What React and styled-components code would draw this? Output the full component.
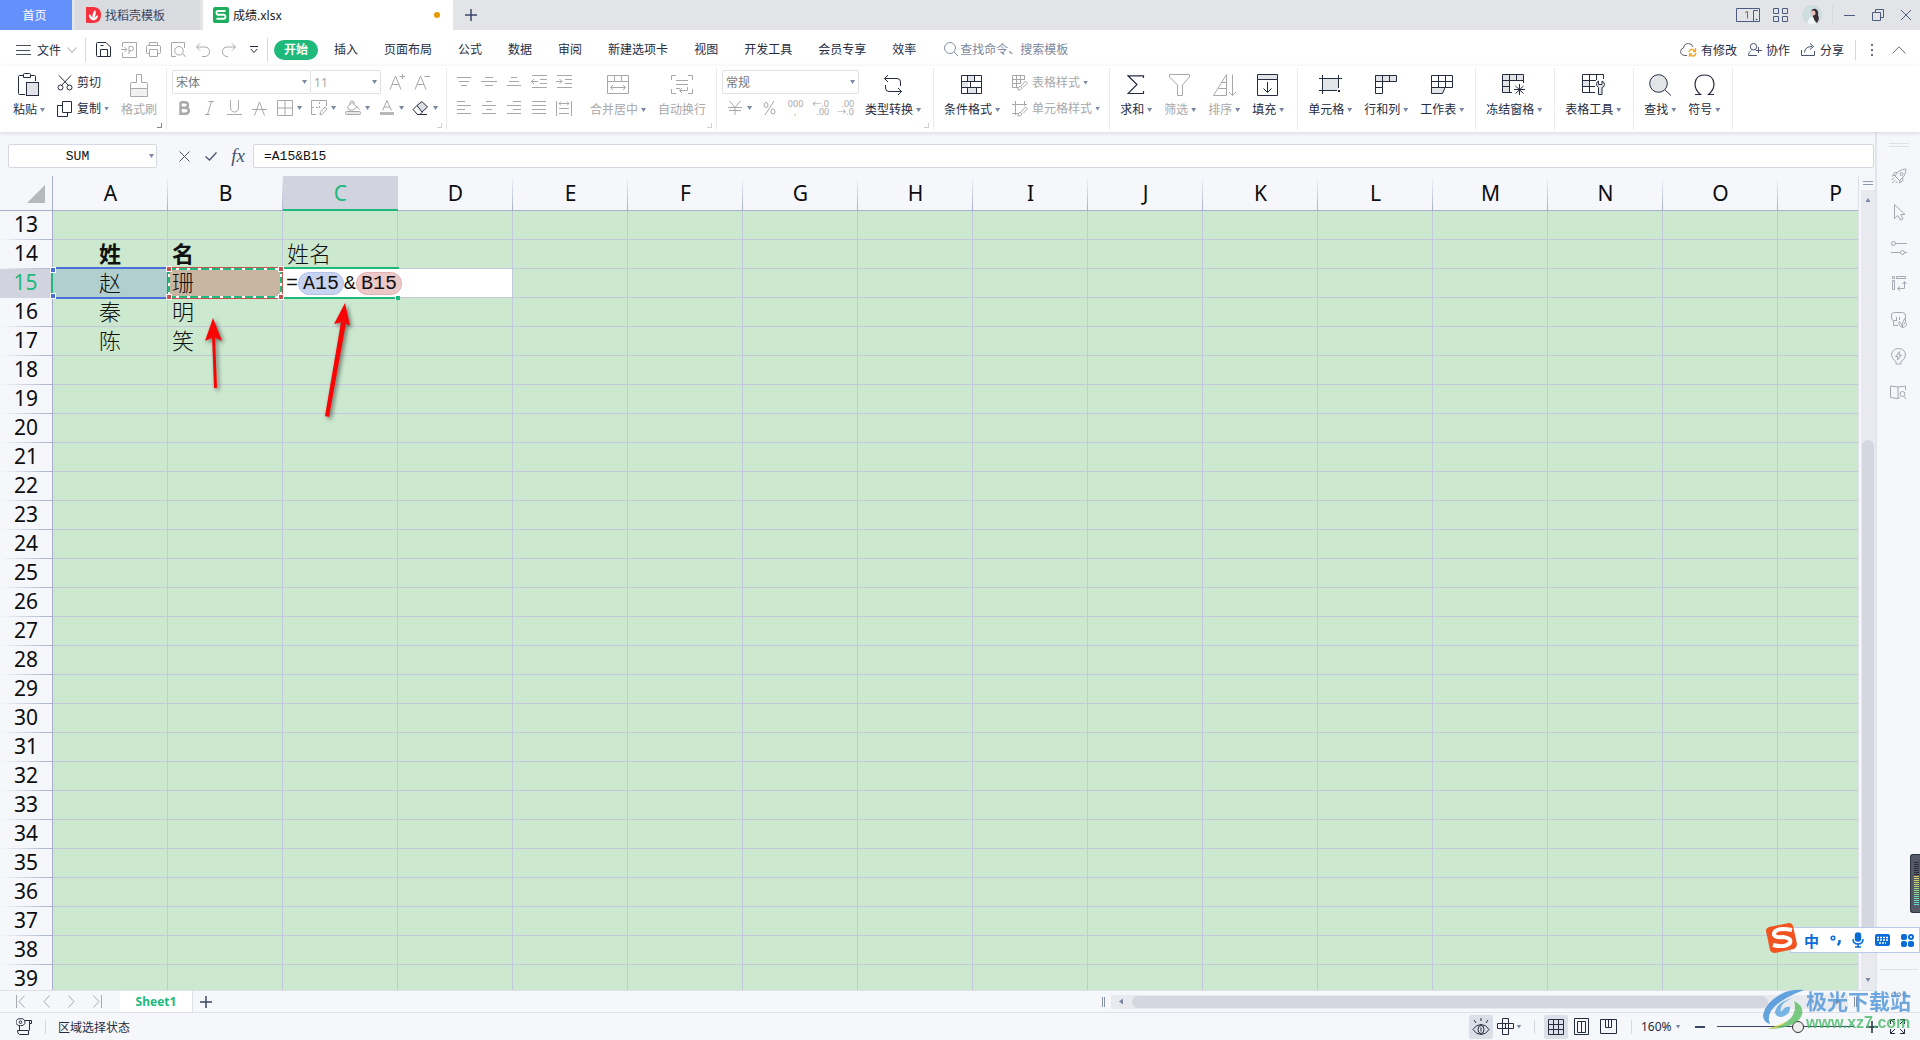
import React, {useState} from 'react';
import styled, {createGlobalStyle, css} from "styled-components";

const GlobalStyle = createGlobalStyle`
  * {
    box-sizing: border-box;
  }

  body {
    margin: 0;
    overflow: hidden;
    background: #f5f7fa;
    color: #262c3f;
    font-family: "Noto Sans", "Noto Sans CJK SC", sans-serif;
    font-size: 12px;
  }

  button, input, select {
    font: inherit;
    color: inherit;
    margin: 0;
    padding: 0;
    border: 0;
    background: none;
    outline: none;
  }

  button {
    white-space: nowrap;
  }

  svg {
    display: block;
    flex: none;
  }
`;

const GREEN = "#20b97c";
const MUTED = "#a8a8aa";
const DARK = "#262c3f";
const SHADE = "#e3e4e8";

/* ---------- icons: [width, height, drawing] ---------- */

const ICONS = {
    menu: [15, 12, <path d="M0 1.5H15M0 6.5H14M0 10.5H15" />],
    chevronDown: [10, 6, <path d="M.5.5L5 5.5L9.500.5" />],
    chevronUp: [14, 8, <path d="M.5 7.5L7 .8L13.500 7.5" />],
    save: [15, 15, <path d="M.5 1.500Q.5.5 1.500.5H10L14.500 5V14.500H1.500Q.5 14.500.5 13.500ZM4.500 14.500V7.500H11.500V14.500M4.500 3.500H7.500" />],
    exportPdf: [16, 16, <path d="M1.500 5V.5H15.500V15.500H1.500V10.500M0 7.500H5.500M3.500 5L6 7.500L3.500 10M8 12V4.500H10.500Q12.500 4.500 12.500 6.500T10.500 8.800H8" />],
    print: [15, 15, <path d="M3.500 3.500V.5H11.500V3.500M3.500 11.500H1.500Q.5 11.500.5 10.500V4.500Q.5 3.500 1.500 3.500H13.500Q14.500 3.500 14.500 4.500V10.500Q14.500 11.500 13.500 11.500H11.500M3.500 7.500H11.500V14.500H3.500Z" />],
    preview: [15, 16, <path d="M5 14.500H.5V.5H13.500V6M12 11.500L14.500 15M8 4.500A4 4 0 1 0 8 13A4 4 0 1 0 8 4.500" />],
    undo: [14, 14, <path d="M4 .5L.5 4L4 7.500M.5 4H9Q13.500 4.500 13.500 8.800Q13.500 13 9 13.500H6" />],
    redo: [14, 14, <path d="M10 .5L13.500 4L10 7.500M13.500 4H5Q.5 4.500.5 8.800Q.5 13 5 13.500H6" />],
    more: [8, 8, <path d="M0 .5H8M.8 3L4 6.500L7.200 3" />],
    search: [15, 15, <path d="M6 .5A5.500 5.500 0 1 0 6 11.500A5.500 5.500 0 1 0 6 .5M10 10L14 14" />],
    paste: [22, 24, <>
        <path d="M7 21.500H1.500Q.5 21.500.5 20.500V3.500Q.5 2.500 1.500 2.500H5M13 2.500H16.500Q17.500 2.500 17.500 3.500V8M5.500 1.500Q5.500.5 6.500.5H11.500Q12.500.5 12.500 1.500V4.500H5.500Z" />
        <rect x="8.500" y="9.500" width="12" height="13" fill={SHADE} />
    </>],
    cut: [16, 16, <path d="M2 .5L12 11M14 .5L4 11M3.500 10A2.500 2.500 0 1 0 3.500 15A2.500 2.500 0 1 0 3.500 10M12.500 10A2.500 2.500 0 1 0 12.500 15A2.500 2.500 0 1 0 12.500 10" />],
    copy: [16, 16, <path d="M5.500.5H14.500V11.500H5.500ZM5.500 4.500H.5V15.500H10.500V11.500" />],
    brush: [20, 25, <>
        <path d="M1.500 15.500H18.500V23.500H1.500Z" fill="#f1f1f1" />
        <path d="M1.500 15.500V10.500Q1.500 9.500 3 9.500H7.500V1.500H12.500V9.500H17Q18.500 9.500 18.500 10.500V15.500" />
    </>],
    fontUp: [16, 16, <path d="M1 15.500L6.500 2L12 15.500M3 10.500H10M10.500 2.500H16M13.500 0V5" />],
    fontDown: [16, 16, <path d="M1 15.500L6.500 2L12 15.500M3 10.500H10M10.500 2.500H16" />],
    bold: [11, 14, <path strokeWidth="2.400" d="M1.500 1.200H5.500Q9 1.200 9 4T5.500 6.800H1.500M5.500 6.800Q9.800 6.800 9.800 9.800T6 12.800H1.500V1.200" />],
    italic: [9, 14, <path d="M3.500.5H9M0 13.500H5M6.500.5L2.500 13.500" />],
    underline: [15, 16, <path d="M3.500 0V7Q3.500 12 7.500 12T11.500 7V0M0 14.500H15" />],
    strike: [15, 15, <path d="M2.500 14.500L7.500 1L12.500 14.500M0 8.500H15" />],
    borders: [16, 16, <path d="M.5.5H15.500V15.500H.5ZM8 .5V15.500M.5 8H15.500" />],
    drawBorder: [16, 16, <path d="M5 14.500H.5V.5H15.500V6M.5 7.500H3M5 7.500H7M8.500 2V4M8.500 6V8M9 15L9.500 12L14 7L16 9L11.500 14Z" />],
    fill: [16, 16, <>
        <path d="M2.500 7L7 2.500L12 7L8 10H4ZM5 5V2Q7 -.5 9 2V4M12 7Q14.500 8 14 10" />
        <rect x=".5" y="11.500" width="15" height="3" rx="1" fill="#e6e6e6" />
    </>],
    fontColor: [14, 16, <>
        <path d="M2.500 10.500L7 .5L11.500 10.500M4 7H10" />
        <rect x="0" y="12" width="14" height="3" fill="#b8b8ba" stroke="none" />
    </>],
    eraser: [17, 15, <>
        <path d="M5 4.500L10 .5L15.500 6L10 11Z" fill="#dcdee3" />
        <path d="M5 4.500L1 8.500L5.500 13.500H8L10.500 11M5 13.500H15" />
    </>],
    alignTop: [14, 10, <path d="M0 .5H14M2 4.500H12M4 8.500H10" />],
    alignMid: [16, 10, <path d="M4 .5H12M0 4.500H16M4 8.500H12" />],
    alignBottom: [14, 10, <path d="M4 .5H10M2 4.500H12M0 8.500H14" />],
    outdent: [16, 14, <path d="M1 .5H16M9 4.500H16M9 8.500H16M1 12.500H16M.5 6.500H7M3 4L.5 6.500L3 9" />],
    indent: [16, 14, <path d="M1 .5H16M9 4.500H16M9 8.500H16M1 12.500H16M0 6.500H6M3.500 4L6 6.500L3.500 9" />],
    alignLeft: [14, 14, <path d="M0 .5H8M0 4.500H14M0 8.500H8M0 12.500H14" />],
    alignCenter: [14, 14, <path d="M4 .5H10M0 4.500H14M4 8.500H10M0 12.500H14" />],
    alignRight: [14, 14, <path d="M6 .5H14M0 4.500H14M6 8.500H14M0 12.500H14" />],
    justify: [14, 14, <path d="M0 .5H14M0 4.500H14M0 8.500H14M0 12.500H14" />],
    distribute: [16, 15, <path d="M.5 0V15M15.500 0V15M3 2.500H13M5 .5L3 2.500L5 4.500M11 .5L13 2.500L11 4.500M3 7.500H13M3 12.500H13" />],
    merge: [22, 20, <path d="M.5.5H21.500V18.500H.5ZM.5 6.500H21.500M7.500.5V6.500M14.500.5V6.500M3.500 12.500H18.500M6 10L3.500 12.500L6 15M16 10L18.500 12.500L16 15" />],
    wrap: [22, 20, <path d="M.5 5V.5H5M17 .5H21.500V5M.5 14V18.500H5M21.500 14V18.500H17M5 5.500H17M5 9.500H17M5 13.500H9M16.500 12V15.500H9M11 13L8.500 15.500L11 18" />],
    yuan: [14, 14, <path d="M1.500 0L7 6.500L12.500 0M0 6.500H14M1 9.500H13M7 6.500V14" />],
    percent: [13, 14, <path d="M11 0L2 14M3 1.500A2 2.500 0 1 0 3 6.500A2 2.500 0 1 0 3 1.500M10 8A2 2.500 0 1 0 10 13A2 2.500 0 1 0 10 8" />],
    convert: [20, 22, <path d="M5 1L1.500 4.500L5 8M1.500 4.500H14Q17.500 4.500 17.500 8V12M15 21L18.500 17.500L15 14M18.500 17.500H6Q2.500 17.500 2.500 14V11" />],
    condFormat: [22, 20, <>
        <path d="M6.500.5H13.500V6.500H6.500ZM.5 6.500H7V12.500H.5ZM6.500 13H15.500V18.500H6.500Z" fill={SHADE} stroke="none" />
        <path d="M.5.5H20.500V18.500H.5ZM.5 6.500H20.500M.5 12.500H20.500M6.500.5V6.500M13.500.5V6.500M9.500 6.500V12.500M6.500 12.500V18.500M15.500 12.500V18.500" />
    </>],
    tableStyle: [16, 16, <path d="M7 12.500H.5V.5H12.500V5M.5 4.500H12.500M.5 8.500H9M4.500.5V12.500M8.500.5V8M6 15Q5 13 8 11L10 13Q9 15.500 6 15M9 11L13.500 6L15.500 8L11 12.500" />],
    cellStyle: [16, 16, <path d="M0 3.500H15M3.500 0V14M0 12.500H6M12.500 0V5M6 15Q5 13 8 11L10 13Q9 15.500 6 15M9 11L13.500 6L15.500 8L11 12.500" />],
    sum: [18, 20, <path strokeWidth="1.200" d="M16.500 3V.8H1L10 9.500L1 18.500H16.500V16" />],
    filter: [22, 22, <path d="M.5.5H20.500V3L13.500 11V21.500H8.500V11L.5 3Z" />],
    sort: [23, 22, <path d="M.5 21.500L13.500.5V21.500ZM5.500 14.500H13.500M8.500 8.500H13.500M19.500.5V21.500M16 18L19.500 21.500L23 18" />],
    fillDown: [22, 22, <>
        <path d="M.5.5H20.500V5.500H.5Z" fill={SHADE} />
        <path d="M.5 5.500H20.500V21.500H.5ZM10.500 8V18M6.500 14.500L10.500 18.500L14.500 14.500" />
    </>],
    cell: [23, 20, <>
        <path d="M3.500 3.500H19.500V15.500H3.500Z" fill={SHADE} stroke="none" />
        <path d="M0 3.500H23M3.500 0V19M0 15.500H18M19.500 0V13" />
        <rect x="19" y="15" width="2" height="2" fill={DARK} stroke="none" />
    </>],
    rowCol: [22, 20, <>
        <path d="M.5.5H21.500V6.500H.5Z" fill={SHADE} stroke="none" />
        <path d="M.5.5H21.500V6.500H.5ZM7.500.5V18.500H.5V.5M14.500.5V6.500M.5 12.500H7.500" />
    </>],
    worksheet: [23, 20, <>
        <path d="M.5 12.500H14.500L12 18.500H.5Z" fill={SHADE} stroke="none" />
        <path d="M.5.5H21.500V12.500H.5ZM.5 6.500H21.500M7.500.5V12.500M14.500.5V12.500M.5 12.500V18.500H11.500L14 12.500" />
    </>],
    freeze: [24, 22, <>
        <path d="M.5.5H21.500V6.500H7.500V18.500H.5Z" fill={SHADE} stroke="none" />
        <path d="M10 18.500H.5V.5H21.500V9M.5 6.500H21.500M.5 12.500H7.500M7.500.5V18.500M14.500.5V6.500M17.500 10V21M12 15.500H23M13.500 12L21.500 19.500M21.500 12L13.500 19.500" />
    </>],
    tableTool: [23, 22, <>
        <path d="M.5 6.500H7.500V12.500H.5Z" fill={SHADE} stroke="none" />
        <path d="M13 18.500H.5V.5H21.500V5M.5 6.500H14M.5 12.500H13M7.500.5V18.500M14.500.5V6" />
        <path d="M16.500 20.500V13.500Q14 12 14.500 9.500Q15 7.500 16.500 7V10.500H20V7Q22.500 8 22.500 10.500T20 13.500V20.500Z" fill={SHADE} />
    </>],
    find: [23, 22, <>
        <circle cx="9.500" cy="9.500" r="8.800" fill={SHADE} />
        <path d="M16 16L22 21.500" />
    </>],
    omega: [21, 22, <path strokeWidth="1.200" d="M1 20.500H6.500Q1 16 1 10Q1.500 1 10.500 1T20 10Q20 16 14.500 20.500H20" />],
    cloud: [17, 14, <>
        <path d="M7 12.500H5Q.5 12 .5 8.500Q.8 5.500 3.500 5Q4 .5 8.500.5Q12 .8 13 4" />
        <path stroke="#f5a623" strokeWidth="1.300" d="M9 9Q10 6 13 6.500L15.500 8M15.500 5V8.500H13M16 10Q15 13.500 12 13L9.500 11.500M9.500 14V11H12" />
    </>],
    people: [14, 14, <path d="M5.500.5A3.200 3.200 0 1 0 5.500 7A3.200 3.200 0 1 0 5.500.5M3 7.500Q.5 9 .5 12.500H9M9 7.500H8M10.500 4V10M7.800 7.500H14" />],
    share: [15, 14, <path d="M.5 7V12.500H13.500V8M3.500 9.500Q4 3.500 11 3.500M9 .5L12.500 3.500L9 6.500" />],
    dots: [2, 12, <path strokeWidth="2" d="M1 0V2M1 5V7M1 10V12" />],
    windows: [24, 15, <>
        <path d="M.5.5H23.500V13.500H.5ZM22 2.500H17.500V13M19.500 11.500H21.500" />
        <path stroke="#7b6a58" d="M9 4.500L11.500 3.500V10.500" />
    </>],
    apps: [15, 15, <path d="M.5.5H5.500V5.500H.5ZM9.500.5H14.500V5.500H9.500ZM.5 8.500H5.500V13.500H.5ZM9.500 8.500H14.500V13.500H9.500Z" />],
    minimize: [11, 2, <path d="M0 1.500H11" />],
    restore: [12, 12, <path d="M.5 3.500H8.500V11.500H.5ZM3.500 3.500V.5H11.500V8.500H8.500" />],
    close: [10, 10, <path d="M0 0L10 10M10 0L0 10" />],
    plus: [12, 12, <path strokeWidth="1.500" d="M6 0V12M0 6H12" />],
    cross: [11, 11, <path d="M.5.5L10.500 10.500M10.500.5L.5 10.500" />],
    check: [12, 9, <path strokeWidth="1.300" d="M.5 4.500L4.500 8L11.500.5" />],
    first: [9, 13, <path d="M.5 0V13M8.500.5L3 6.500L8.500 12.500" />],
    prev: [7, 13, <path d="M6.500.5L1 6.500L6.500 12.500" />],
    next: [7, 13, <path d="M.5.5L6 6.500L.5 12.500" />],
    last: [9, 13, <path d="M8.500 0V13M.5.5L6 6.500L.5 12.500" />],
    macro: [17, 17, <path d="M4.500.8A3.500 3.500 0 1 0 4.500 7.500A3.500 3.500 0 1 0 4.500.8M4.500 2.800A1.300 1.300 0 1 0 4.500 5.500A1.300 1.300 0 1 0 4.500 2.800M8.500 2.500H15.500V5.500H13.500V12.500M3.500 8V12M13.500 2.500V12M1.500 12.500H12.500V16.500H3.500Q1.500 16 1.500 12.500" />],
    eye: [18, 18, <path d="M1 11.500Q4 6.500 9 6.500T17 11.500Q14 16.500 9 16.500T1 11.500M9 7.500A3 4 0 1 0 9 15.500A3 4 0 1 0 9 7.500M9 9.500V13.500M9 0V3M2 2L4 5M16 2L14 5" />],
    crossCells: [17, 17, <path d="M5.500.5H11.500V5.500H16.500V10.500H11.500V16.500H5.500V10.500H.5V5.500H5.500ZM5.500 5.500H11.500V10.500H5.500ZM8.500 5.500V10.500" />],
    grid: [16, 16, <path d="M.5.5H15.500V15.500H.5ZM.5 5.500H15.500M.5 10.500H15.500M5.500.5V15.500M10.500.5V15.500" />],
    pageLayout: [16, 18, <path d="M.5.5H14.500V16.500H.5ZM3.500 3.500H11.500V14.500H3.500ZM7.500 3.500V14.500" />],
    pageBreak: [17, 16, <path d="M.5.5H16.500V14.500H.5ZM5.500.5V8.500H11.500V.5M8.500.5V8.500" />],
    fullscreen: [15, 15, <path d="M.5 5V.5H5M10 .5H14.500V5M.5 10V14.500H5M14.500 10V14.500H10M.5.5L5 5M14.500.5L10 5M.5 14.500L5 10M14.500 14.500L10 10" />],
    rocket: [16, 16, <path d="M4 8Q7 1.500 15 1Q15 8 8.500 12.500L4 8M4.500 7L1.500 8L3.500 4.500L6.500 4.500M9 12L8.500 15L12 12.500L11.500 9.500M10.500 4.500A1.500 1.500 0 1 0 10.500 7.500A1.500 1.500 0 1 0 10.500 4.500M.5 11.500L3 10M1 15L4.500 12M5 15L6 13.500" />],
    cursor: [14, 17, <path d="M2.500.5V14.500L6 11.500L8.500 16L11 15L8.800 10.500H13Z" />],
    sliders: [16, 16, <path d="M4.500 3.500H16M2.500 1.500A2 2 0 1 0 2.500 5.500A2 2 0 1 0 2.500 1.500M0 12.500H9M13.500 12.500H16M11.500 10.500A2 2 0 1 0 11.500 14.500A2 2 0 1 0 11.500 10.500" />],
    pivot: [16, 16, <path d="M1.500.5H3.500V2.500H1.500ZM5.500.5H14.500V2.500H5.500ZM1.500 4.500H3.500V13.500H1.500ZM13.500 6V12.500H7M11.500 8L13.500 5.500L15.500 8M9 10.500L6.500 12.500L9 15" />],
    assets: [16, 16, <path d="M7 13.500H2.500V8.500Q.5 8 .5 6V3Q.8.5 3.500.5H11.500Q14.200.8 14.500 3V6M5.500 5V8M8.500 5V8M2.500 8.500H6M11.500 15.500Q7.500 14 8 9.500Q11 11 11.500 15.500Q11 9 14 6Q15.500 9 13.500 12M11.500 15.500Q16 14.500 15.500 11" />],
    bulb: [15, 17, <path d="M5 13.500Q.5 11 .5 7Q1 .8 7.500.5Q14 .8 14.500 7Q14.500 11 10 13.500V16H5ZM8.500 3.500L4.500 8.500H7L6.500 12L10.500 7H8Z" />],
    book: [17, 15, <path d="M10 12.500L8 13.500L.5 12.500V1L8 2L15.500 1V5M8 2V13.500M12.500 6.500A2.500 2.500 0 1 0 12.500 11.500A2.500 2.500 0 1 0 12.500 6.500M14 11.500L16 14" />],
    ellipsis: [16, 5, <path d="M2.500.8A1.700 1.700 0 1 0 2.500 4.200A1.700 1.700 0 1 0 2.500.8M8 .8A1.700 1.700 0 1 0 8 4.200A1.700 1.700 0 1 0 8 .8M13.500.8A1.700 1.700 0 1 0 13.500 4.200A1.700 1.700 0 1 0 13.500.8" />],
};

const Icon = ({name, color}) => {
    const [w, h, body] = ICONS[name];
    return (
        <svg width={w} height={h} viewBox={`0 0 ${w} ${h}`} fill="none" stroke={color || "currentColor"} aria-hidden="true">
            {body}
        </svg>
    );
};

const Caret = styled.i`
  flex: none;
  width: 5px;
  height: 4px;
  margin-left: ${p => p.$gap === undefined ? 3 : p.$gap}px;
  background: #7a87a3;
  clip-path: ${p => p.$up ? "polygon(50% 0, 100% 100%, 0 100%)" : "polygon(0 0, 100% 0, 50% 100%)"};
`;

/* ---------- title bar ---------- */

const Page = styled.div`
  display: flex;
  flex-direction: column;
  height: 100vh;
`;

const TitleBar = styled.header`
  display: flex;
  height: 30px;
  flex: none;
  background: #e2e4e8;
`;

const FileTab = styled.button`
  display: flex;
  align-items: center;
  gap: 4px;
  width: ${p => p.$width}px;
  margin-right: 3px;
  padding: 0 13px 0 10px;
  background: ${p => p.$bg};
  color: ${p => p.$color};
  justify-content: ${p => p.$center ? "center" : "flex-start"};
`;

const UnsavedDot = styled.span`
  width: 6px;
  height: 6px;
  margin-left: auto;
  border-radius: 50%;
  background: #e69a00;
`;

const NewTab = styled.button`
  display: flex;
  align-items: center;
  padding: 0 9px;
  color: #3b4664;
`;

const WindowTools = styled.div`
  display: flex;
  align-items: center;
  margin-left: auto;
  color: #4c5c80;
`;

const ToolButton = styled.button`
  display: flex;
  align-items: center;
  justify-content: center;
  width: ${p => p.$width || 25}px;
  height: 24px;
  color: ${p => p.$color || "inherit"};
`;

const Divider = styled.span`
  flex: none;
  width: 1px;
  height: ${p => p.$height || 20}px;
  margin: 0 ${p => p.$gap || 0}px;
  background: #d5d8df;
`;

/* ---------- menu ---------- */

const MenuBar = styled.nav`
  display: flex;
  align-items: center;
  flex: none;
  height: 36px;
  padding: 3px 10px 0 10px;
  background: #fff;
`;

const FileMenu = styled.button`
  display: flex;
  align-items: center;
  gap: 6px;
  padding: 0 8px 0 6px;
  color: ${DARK};
`;

const MenuTabs = styled.div`
  display: flex;
  align-items: center;
  margin-left: 6px;
`;

const MenuTab = styled.button`
  height: 20px;
  padding: 0 13px;
  line-height: 20px;
  ${p => p.$active && css`
    padding: 0 10px;
    margin-right: 3px;
    border-radius: 10px;
    background: ${GREEN};
    color: #fff;
    font-weight: bold;
  `}
`;

const SearchBox = styled.label`
  display: flex;
  align-items: center;
  gap: 1px;
  margin-left: 15px;
  color: #8791a8;

  input {
    width: 140px;
  }

  input::placeholder {
    color: #7b87a2;
    opacity: 1;
  }
`;

const Share = styled.div`
  display: flex;
  align-items: center;
  margin-left: auto;
`;

const ShareButton = styled.button`
  display: flex;
  align-items: center;
  gap: 4px;
  margin-right: 11px;
`;

/* ---------- ribbon ---------- */

const Ribbon = styled.section`
  position: relative;
  z-index: 1;
  display: flex;
  flex: none;
  height: 66px;
  padding: 2px 0;
  background: #fff;
  box-shadow: 0 1px 4px rgba(60, 70, 90, 0.18);
`;

const Group = styled.div`
  position: relative;
  display: flex;
  padding: 2px ${p => p.$right === undefined ? 6 : p.$right}px 0 ${p => p.$left || 4}px;
  border-right: 1px solid #eaebef;
`;

const Launcher = styled.button`
  position: absolute;
  right: 4px;
  bottom: 2px;
  width: 5px;
  height: 5px;
  border-right: 1px solid ${p => p.$dim ? "#ccd0da" : "#7a87a3"};
  border-bottom: 1px solid ${p => p.$dim ? "#ccd0da" : "#7a87a3"};
`;

const Rows = styled.div`
  display: flex;
  flex-direction: column;
  gap: 2px;
  margin-right: ${p => p.$after || 0}px;
`;

const Row = styled.div`
  display: flex;
  align-items: center;
  height: 24px;
  color: ${MUTED};
`;

const BigButton = styled.button`
  display: flex;
  flex-direction: column;
  align-items: center;
  height: 50px;
  padding: 0 6px;
  color: ${p => p.$muted ? MUTED : DARK};
`;

const BigIcon = styled.span`
  display: flex;
  align-items: center;
  height: 30px;
`;

const Label = styled.span`
  display: flex;
  align-items: center;
  line-height: 20px;
`;

const SmallButton = styled.button`
  display: flex;
  align-items: center;
  gap: 4px;
  height: 24px;
  padding: 1px 6px 0;
  color: ${p => p.$muted ? MUTED : DARK};
`;

const DropButton = styled.button`
  display: flex;
  align-items: center;
  width: 34px;
  height: 24px;
  padding-left: 4px;
  color: ${p => p.$color || "inherit"};

  span {
    display: flex;
    justify-content: center;
    width: 17px;
  }
`;

const SelectBox = styled.label`
  position: relative;
  display: flex;
  align-items: center;
  width: ${p => p.$width}px;
  height: 24px;
  margin-right: ${p => p.$after || 0}px;
  padding-right: 3px;
  border: 1px solid #dfe1e6;
  border-left-width: ${p => p.$joined ? 0 : 1}px;
  border-radius: ${p => p.$joined ? "0 2px 2px 0" : "2px"};
  background: #fff;

  select {
    flex: 1;
    height: 20px;
    padding: 0 3px;
    appearance: none;
    color: ${p => p.$dim ? MUTED : "#77787c"};
  }
`;

const Decimals = styled.span`
  font-size: 9px;
  line-height: 8px;
  text-align: center;
  white-space: pre;
`;

const Big = ({icon, label, muted, drop = true}) => (
    <BigButton $muted={muted}>
        <BigIcon><Icon name={icon} /></BigIcon>
        <Label>{label}{drop && <Caret />}</Label>
    </BigButton>
);

const Small = ({icon, label, muted, drop}) => (
    <SmallButton $muted={muted}>
        <Icon name={icon} />
        <Label>{label}{drop && <Caret />}</Label>
    </SmallButton>
);

const Drop = ({icon, label, color}) => (
    <DropButton aria-label={label} $color={color}>
        <span><Icon name={icon} /></span>
        <Caret $gap={4} />
    </DropButton>
);

/* ---------- work area ---------- */

const Body = styled.div`
  display: flex;
  flex: 1;
  min-height: 0;
`;

const Main = styled.main`
  display: flex;
  flex-direction: column;
  flex: 1;
  min-width: 0;
`;

const FormulaBar = styled.div`
  display: flex;
  align-items: center;
  flex: none;
  height: 44px;
  padding: 4px 1px 0 8px;
  color: #49536e;
`;

const NameBox = styled.div`
  display: flex;
  align-items: center;
  width: 149px;
  height: 24px;
  margin-right: 15px;
  padding-right: 2px;
  border: 1px solid #d6d9e1;
  border-radius: 2px;
  background: #fff;

  input {
    flex: 1;
    min-width: 0;
    text-align: center;
    font: 13px "Liberation Mono", monospace;
    color: #111;
  }
`;

const Fx = styled.button`
  width: 26px;
  margin-right: 2px;
  font: italic 19px "Liberation Serif", serif;
`;

const FormulaInput = styled.input`
  flex: 1;
  height: 24px;
  padding: 0 10px;
  border: 1px solid #d6d9e1;
  border-radius: 2px;
  background: #fff;
  color: #111;
  font: 13px "Liberation Mono", monospace;
`;

const SheetArea = styled.div`
  display: flex;
  flex: 1;
  min-height: 0;
`;

const Viewport = styled.div`
  position: relative;
  flex: 1;
  min-width: 0;
  overflow: hidden;
`;

const Table = styled.table`
  width: max-content;
  table-layout: fixed;
  border-collapse: separate;
  border-spacing: 0;
  font-size: 21px;
`;

const Corner = styled.th`
  width: 53px;
  height: 35px;
  padding: 0 7px 7px 0;
  vertical-align: bottom;
  border-right: 1px solid #a9b0cb;
  border-bottom: 1px solid #a9b0cb;

  i {
    display: block;
    width: 18px;
    height: 18px;
    margin-left: auto;
    background: #b7b8ba;
    clip-path: polygon(100% 0, 100% 100%, 0 100%);
  }
`;

const ColHead = styled.th`
  width: 115px;
  height: 35px;
  padding: 0;
  border-bottom: 1px solid #a9b0cb;
  background: linear-gradient(rgba(169, 176, 203, 0), #a9b0cb) right / 1px 100% no-repeat;
  color: #0d0d10;
  font-weight: normal;
  line-height: 32px;
  ${p => p.$selected && css`
    border-bottom: 2px solid ${GREEN};
    background: #d1d4de;
    color: ${GREEN};
  `}
`;

const RowHead = styled.th`
  height: 29px;
  padding: 0 0 3px;
  border-right: 1px solid #a9b0cb;
  background: linear-gradient(to right, rgba(169, 176, 203, 0), #a9b0cb) bottom / 100% 1px no-repeat;
  color: #0d0d10;
  font-weight: normal;
  line-height: 26px;
  ${p => p.$selected && css`
    border-right: 2px solid ${GREEN};
    background: #d1d4de;
    color: ${GREEN};
  `}
`;

const Cell = styled.td`
  position: relative;
  height: 29px;
  padding: 6px 4px 0;
  border-right: 1px solid #c4c8dc;
  border-bottom: 1px solid #c4c8dc;
  background: ${p => p.$fill || "#cce8cf"};
  color: #111;
  font-family: "Liberation Mono", "Noto Sans CJK SC", monospace;
  font-size: 22px;
  font-weight: ${p => p.$bold ? "bold" : 300};
  line-height: 22px;
  text-align: ${p => p.$center ? "center" : "left"};
`;

const RefFrame = styled.div`
  position: absolute;
  z-index: 1;
  inset: -2px -1px;
  border: solid #4a6fd8;
  border-width: 2px 0;
`;

const CopyFrame = styled.div`
  position: absolute;
  z-index: 2;
  inset: -2px -1px;
  border: 1px solid #c4524f;
  background:
    repeating-linear-gradient(90deg, ${GREEN} 0 8px, #fff 8px 11px) top / 100% 2px no-repeat,
    repeating-linear-gradient(90deg, ${GREEN} 0 8px, #fff 8px 11px) bottom / 100% 2px no-repeat,
    repeating-linear-gradient(${GREEN} 0 6px, #fff 6px 9px) left / 2px 100% no-repeat,
    repeating-linear-gradient(${GREEN} 0 6px, #fff 6px 9px) right / 2px 100% no-repeat;
`;

const Handle = styled.i`
  position: absolute;
  width: 6px;
  height: 6px;
  border: 1px solid #fff;
  background: ${p => p.$color};
  ${p => p.$top ? "top" : "bottom"}: -2px;
  ${p => p.$left ? "left" : "right"}: -2px;
`;

const Editor = styled.div`
  position: absolute;
  z-index: 1;
  top: 0;
  left: 0;
  display: flex;
  align-items: center;
  width: 229px;
  height: 28px;
  padding: 1px 0 0 3px;
  background: #fff;
  font-size: 20px;
  font-weight: normal;

  &::before, &::after {
    content: "";
    position: absolute;
    left: 0;
    width: 116px;
    height: 2px;
    background: ${GREEN};
  }

  &::before {
    top: -2px;
  }

  &::after {
    bottom: -2px;
  }
`;

const RefPill = styled.span`
  height: 23px;
  padding: 0 4px;
  border: 1px solid ${p => p.$edge};
  border-radius: 11px;
  background: ${p => p.$bg};
`;

const FillHandle = styled.i`
  position: absolute;
  z-index: 1;
  left: 112px;
  bottom: -3px;
  width: 5px;
  height: 4px;
  border-left: 1px solid #fff;
  background: ${GREEN};
`;

const Arrows = styled.svg`
  position: absolute;
  z-index: 3;
  top: 120px;
  left: 190px;
  filter: drop-shadow(2px 2px 2px rgba(0, 0, 0, 0.5));
`;

const VScroll = styled.div`
  display: flex;
  flex-direction: column;
  width: 17px;
  padding: 5px 0 0 2px;
  border-left: 1px solid #dfe1ea;
`;

const SplitGrip = styled.i`
  width: 10px;
  height: 4px;
  margin: 0 0 5px 2px;
  border: solid #8b97b0;
  border-width: 1px 0;
`;

const VTrack = styled.div`
  display: flex;
  flex-direction: column;
  align-items: center;
  flex: 1;
  padding: 8px 1px;
  background: #e8eaf0;
`;

const VThumb = styled.div`
  flex: 1;
  width: 12px;
  margin: 238px 0 32px;
  border-radius: 6px;
  background: #d4d7e0;
`;

const SheetBar = styled.div`
  display: flex;
  align-items: center;
  flex: none;
  height: 22px;
  padding: 0 18px 0 16px;
  border-top: 1px solid #dfe1e8;
`;

const SheetNav = styled.div`
  display: flex;
  align-items: center;
  gap: 18px;
  width: 104px;
  color: #a7a9af;
`;

const SheetTab = styled.button`
  width: 73px;
  height: 21px;
  border-right: 1px solid #dfe1e8;
  background: #fff;
  color: ${GREEN};
  font-weight: bold;
  line-height: 20px;
`;

const HScroll = styled.div`
  display: flex;
  align-items: center;
  gap: 6px;
  width: 755px;
  margin-left: auto;
`;

const Grip = styled.i`
  flex: none;
  width: 3px;
  height: 10px;
  border: solid #8791a8;
  border-width: 0 1px;
`;

const HTrack = styled.div`
  display: flex;
  align-items: center;
  flex: 1;
  height: 14px;
  padding: 0 8px;
  background: #e8eaf0;
`;

const HThumb = styled.div`
  width: 636px;
  height: 12px;
  margin-left: 9px;
  border-radius: 6px;
  background: #d4d7df;
`;

const SideCaret = styled.i`
  width: 4px;
  height: 6px;
  margin-left: ${p => p.$right ? "auto" : 0};
  background: #7a87a3;
  clip-path: ${p => p.$right ? "polygon(0 0, 100% 50%, 0 100%)" : "polygon(100% 0, 100% 100%, 0 50%)"};
`;

/* ---------- side bar ---------- */

const SideBar = styled.aside`
  display: flex;
  flex-direction: column;
  align-items: center;
  flex: none;
  width: 45px;
  padding-top: 11px;
  border-left: 2px solid #e3e5ec;
  color: #a5a8b0;
`;

const SideGrip = styled.i`
  width: 20px;
  height: 4px;
  margin-bottom: 11px;
  border: solid #dfe1e6;
  border-width: 1px 0;
`;

const SideButton = styled.button`
  display: flex;
  align-items: center;
  justify-content: center;
  width: 36px;
  height: 36px;
`;

const SideMore = styled.button`
  display: flex;
  align-items: center;
  justify-content: center;
  width: 38px;
  height: 43px;
  margin-top: auto;
  padding-top: 6px;
  border-top: 1px solid #dfe1e8;
  color: #7a87a3;
`;

/* ---------- status bar ---------- */

const StatusBar = styled.footer`
  display: flex;
  align-items: center;
  flex: none;
  height: 28px;
  padding: 0 15px 0 16px;
  border-top: 1px solid #dfe1e8;
`;

const StatusText = styled.span`
  margin-right: auto;
`;

const ViewButton = styled.button`
  display: flex;
  align-items: center;
  justify-content: center;
  width: ${p => p.$width || 24}px;
  height: 24px;
  margin-right: 2px;
  border-radius: 2px;
  background: ${p => p.$active ? "#dbdfe7" : "none"};
`;

const ZoomLevel = styled.button`
  display: flex;
  align-items: center;
  width: 54px;
`;

const ZoomRange = styled.input`
  width: 137px;
  height: 14px;
  margin: 0 0 0 12px;
  appearance: none;
  background: linear-gradient(#3b4664, #3b4664) center / 100% 1px no-repeat;

  &::-webkit-slider-thumb {
    appearance: none;
    width: 12px;
    height: 12px;
    border: 1px solid #333;
    border-radius: 50%;
    background: #eee;
  }
`;

const Minus = styled.i`
  display: block;
  width: 10px;
  height: 2px;
  background: #3b4664;
`;

/* ---------- floating windows ---------- */

const ImeBar = styled.div`
  position: fixed;
  z-index: 5;
  right: 0;
  bottom: 87px;
  display: flex;
  align-items: center;
  justify-content: space-between;
  width: 130px;
  height: 26px;
  padding: 0 5px 0 13px;
  border: 1px solid #b9cbe9;
  background: #fff;
  color: #0a6cd6;
`;

const ImeLogo = styled.svg`
  position: absolute;
  top: -6px;
  left: -26px;
`;

const ImeText = styled.span`
  font-size: 15px;
  font-weight: bold;
`;

const LevelMeter = styled.div`
  position: fixed;
  z-index: 5;
  right: 0;
  bottom: 127px;
  width: 10px;
  height: 59px;
  padding: 7px 1px 7px 3px;
  border: 1px solid #2f3340;
  border-right: 0;
  border-radius: 3px 0 0 3px;
  background: #555a68;

  i {
    display: block;
    height: 100%;
    background:
      repeating-linear-gradient(transparent 0 1px, #555a68 1px 2px),
      linear-gradient(#2b2e3a 0 30%, #e8cf5a 30%, #9fd98a 65%, #5fd6cf);
  }
`;

const Watermark = styled.div`
  position: fixed;
  z-index: 6;
  right: 9px;
  bottom: 7px;
  display: flex;
  gap: 1px;
  opacity: 0.8;
  pointer-events: none;
`;

const WatermarkText = styled.div`
  color: #4d94d8;
  font-size: 21px;
  font-weight: bold;
  line-height: 24px;
  white-space: nowrap;

  span {
    display: block;
    color: #4cb86a;
    font-family: "Liberation Sans", sans-serif;
    font-size: 16px;
    line-height: 20px;
  }
`;

const TABS = ["开始", "插入", "页面布局", "公式", "数据", "审阅", "新建选项卡", "视图", "开发工具", "会员专享", "效率"];
const COLUMNS = "ABCDEFGHIJKLMNOP".split("");
const ROWS = Array.from({length: 27}, (_, i) => i + 13);
const CELLS = {
    A14: "姓", B14: "名", C14: "姓名",
    A15: "赵", B15: "珊",
    A16: "秦", B16: "明",
    A17: "陈", B17: "笑",
};
const FILLS = {A15: "#b2cfcf", B15: "#c8b6a3"};
const SIDE = ["rocket", "cursor", "sliders", "pivot", "assets", "bulb", "book"];

const FormulaEditor = () => (
    <>
        <Editor>
            =<RefPill $bg="#c8d3f0" $edge="#b4c2ea">A15</RefPill>
            &amp;<RefPill $bg="#ecc9c9" $edge="#e3b3b3">B15</RefPill>
        </Editor>
        <FillHandle />
    </>
);

const Sheet = () => (
    <Table>
        <thead>
            <tr>
                <Corner aria-label="全选"><i /></Corner>
                {COLUMNS.map(c => <ColHead key={c} scope="col" $selected={c === "C"}>{c}</ColHead>)}
            </tr>
        </thead>
        <tbody>
            {ROWS.map(r => (
                <tr key={r}>
                    <RowHead scope="row" $selected={r === 15}>{r}</RowHead>
                    {COLUMNS.map(c => {
                        const id = c + r;
                        return (
                            <Cell key={id} $fill={FILLS[id]} $center={c === "A"} $bold={id === "A14" || id === "B14"}>
                                {CELLS[id]}
                                {id === "A15" && <RefFrame><Handle $color="#4a6fd8" $top $left /><Handle $color="#4a6fd8" $left /></RefFrame>}
                                {id === "B15" && <CopyFrame>
                                    <Handle $color="#c4524f" $top $left /><Handle $color="#c4524f" $left />
                                    <Handle $color="#c4524f" $top /><Handle $color="#c4524f" />
                                </CopyFrame>}
                                {id === "C15" && <FormulaEditor />}
                            </Cell>
                        );
                    })}
                </tr>
            ))}
        </tbody>
    </Table>
);

const App = () => {
    const [active, setActive] = useState("开始");
    const [formula, setFormula] = useState("=A15&B15");
    const [zoom, setZoom] = useState(60);

    return (
        <Page>
            <GlobalStyle />
            <TitleBar>
                <FileTab $width={72} $bg="#6490fb" $color="#fff" $center>首页</FileTab>
                <FileTab $width={125} $bg="#d9dbdf" $color="#3d465e">
                    <svg width="16" height="16" viewBox="0 0 16 16">
                        <path d="M1 0H9Q16 .5 16 8T9 16H2Q1 16 1 15Z" fill="#f5313d" />
                        <path d="M7 13Q3.500 11 4 7Q6.500 8.500 7.500 11Q7 6 10 3Q12 6 9 11.500Q10.500 8.500 13 8Q13 12 9 13.500Z" fill="#fff" />
                    </svg>
                    找稻壳模板
                </FileTab>
                <FileTab $width={250} $bg="#fff" $color="#151823">
                    <svg width="16" height="16" viewBox="0 0 16 16">
                        <rect width="16" height="16" rx="2" fill="#1cae5c" />
                        <path d="M12.500 4H5Q3.500 4 3.500 5.800T5 7.800H11Q12.500 8 12.500 9.800T11 11.800H3.500" fill="none" stroke="#fff" strokeWidth="2" />
                    </svg>
                    成绩.xlsx
                    <UnsavedDot />
                </FileTab>
                <NewTab aria-label="新建标签"><Icon name="plus" /></NewTab>
                <WindowTools>
                    <ToolButton $width={36} aria-label="窗口"><Icon name="windows" /></ToolButton>
                    <ToolButton $width={28} aria-label="应用"><Icon name="apps" /></ToolButton>
                    <ToolButton $width={36} aria-label="账户">
                        <svg width="20" height="20" viewBox="0 0 20 20">
                            <circle cx="10" cy="10" r="10" fill="#cddde0" />
                            <path d="M9 7Q10 3 14 4Q17 6 16 10Q18 14 15 18L12 15Q10 11 11 8Z" fill="#3a2c33" />
                            <circle cx="11" cy="8" r="2.500" fill="#e6c4ba" />
                            <path d="M5 18Q7 11 11 12L14 19Q9 21 5 18Z" fill="#eef3f4" />
                        </svg>
                    </ToolButton>
                    <Divider $gap={2} />
                    <ToolButton $width={28} aria-label="最小化"><Icon name="minimize" /></ToolButton>
                    <ToolButton $width={29} aria-label="还原"><Icon name="restore" /></ToolButton>
                    <ToolButton $width={28} aria-label="关闭"><Icon name="close" /></ToolButton>
                </WindowTools>
            </TitleBar>

            <MenuBar>
                <FileMenu><Icon name="menu" color="#4b4f5c" />文件<Icon name="chevronDown" color="#9a9da6" /></FileMenu>
                <Divider $height={24} />
                <ToolButton $width={34} aria-label="保存"><Icon name="save" /></ToolButton>
                <ToolButton $color={MUTED} $width={18} aria-label="输出为PDF"><Icon name="exportPdf" /></ToolButton>
                <ToolButton $color={MUTED} $width={30} aria-label="打印"><Icon name="print" /></ToolButton>
                <ToolButton $color={MUTED} $width={20} aria-label="打印预览"><Icon name="preview" /></ToolButton>
                <ToolButton $color={MUTED} $width={29} aria-label="撤销"><Icon name="undo" /></ToolButton>
                <ToolButton $color={MUTED} $width={24} aria-label="恢复"><Icon name="redo" /></ToolButton>
                <ToolButton $width={26} aria-label="更多"><Icon name="more" /></ToolButton>
                <Divider $height={24} />
                <MenuTabs>
                    {TABS.map(t => <MenuTab key={t} $active={t === active} onClick={() => setActive(t)}>{t}</MenuTab>)}
                </MenuTabs>
                <SearchBox>
                    <Icon name="search" />
                    <input aria-label="搜索" placeholder="查找命令、搜索模板" />
                </SearchBox>
                <Share>
                    <ShareButton><Icon name="cloud" color="#5d6270" />有修改</ShareButton>
                    <ShareButton><Icon name="people" color="#4b5570" />协作</ShareButton>
                    <ShareButton><Icon name="share" color="#4b5570" />分享</ShareButton>
                    <Divider />
                    <ToolButton $width={32} aria-label="菜单"><Icon name="dots" color="#6b7080" /></ToolButton>
                    <ToolButton $width={22} aria-label="收起"><Icon name="chevronUp" color="#6b7080" /></ToolButton>
                </Share>
            </MenuBar>

            <Ribbon>
                <Group $left={7} $right={3}>
                    <Big icon="paste" label="粘贴" />
                    <Rows>
                        <Small icon="cut" label="剪切" />
                        <Small icon="copy" label="复制" drop />
                    </Rows>
                    <Big icon="brush" label="格式刷" drop={false} muted />
                    <Launcher aria-label="剪贴板" />
                </Group>
                <Group $left={5} $right={4}>
                    <Rows>
                        <Row>
                            <SelectBox $width={139}>
                                <select aria-label="字体"><option>宋体</option></select>
                                <Caret />
                            </SelectBox>
                            <SelectBox $width={70} $after={3} $joined $dim>
                                <select aria-label="字号"><option>11</option></select>
                                <Caret />
                            </SelectBox>
                            <ToolButton aria-label="增大字号"><Icon name="fontUp" /></ToolButton>
                            <ToolButton aria-label="减小字号"><Icon name="fontDown" /></ToolButton>
                        </Row>
                        <Row>
                            {["bold", "italic", "underline", "strike"].map(n => <ToolButton key={n} aria-label={n}><Icon name={n} /></ToolButton>)}
                            <Drop icon="borders" label="边框" />
                            <Drop icon="drawBorder" label="绘制边框" />
                            <Drop icon="fill" label="填充颜色" />
                            <Drop icon="fontColor" label="字体颜色" />
                            <Drop icon="eraser" label="清除" color={DARK} />
                        </Row>
                    </Rows>
                    <Launcher aria-label="字体设置" $dim />
                </Group>
                <Group $right={4}>
                    <Rows $after={8}>
                        <Row>
                            {["alignTop", "alignMid", "alignBottom", "outdent", "indent"].map(n => <ToolButton key={n} aria-label={n}><Icon name={n} /></ToolButton>)}
                        </Row>
                        <Row>
                            {["alignLeft", "alignCenter", "alignRight", "justify", "distribute"].map(n => <ToolButton key={n} aria-label={n}><Icon name={n} /></ToolButton>)}
                        </Row>
                    </Rows>
                    <Big icon="merge" label="合并居中" muted />
                    <Big icon="wrap" label="自动换行" drop={false} muted />
                    <Launcher aria-label="对齐设置" $dim />
                </Group>
                <Group $left={5}>
                    <Rows>
                        <Row>
                            <SelectBox $width={137}>
                                <select aria-label="数字格式"><option>常规</option></select>
                                <Caret />
                            </SelectBox>
                        </Row>
                        <Row>
                            <Drop icon="yuan" label="货币" />
                            <ToolButton $width={27} aria-label="百分比"><Icon name="percent" /></ToolButton>
                            <ToolButton aria-label="千位分隔"><Decimals>{"000\n,"}</Decimals></ToolButton>
                            <ToolButton aria-label="增加小数位"><Decimals>{"←.0\n  .00"}</Decimals></ToolButton>
                            <ToolButton aria-label="减少小数位"><Decimals>{"  .00\n→.0"}</Decimals></ToolButton>
                        </Row>
                    </Rows>
                    <Big icon="convert" label="类型转换" />
                    <Launcher aria-label="数字设置" $dim />
                </Group>
                <Group $right={3}>
                    <Big icon="condFormat" label="条件格式" />
                    <Rows>
                        <Small icon="tableStyle" label="表格样式" drop muted />
                        <Small icon="cellStyle" label="单元格样式" drop muted />
                    </Rows>
                </Group>
                <Group $right={7}>
                    <Big icon="sum" label="求和" />
                    <Big icon="filter" label="筛选" muted />
                    <Big icon="sort" label="排序" muted />
                    <Big icon="fillDown" label="填充" />
                </Group>
                <Group $right={5}>
                    <Big icon="cell" label="单元格" />
                    <Big icon="rowCol" label="行和列" />
                    <Big icon="worksheet" label="工作表" />
                </Group>
                <Group><Big icon="freeze" label="冻结窗格" /></Group>
                <Group><Big icon="tableTool" label="表格工具" /></Group>
                <Group>
                    <Big icon="find" label="查找" />
                    <Big icon="omega" label="符号" />
                </Group>
            </Ribbon>

            <Body>
                <Main>
                    <FormulaBar>
                        <NameBox>
                            <input aria-label="名称框" defaultValue="SUM" />
                            <Caret />
                        </NameBox>
                        <ToolButton aria-label="取消"><Icon name="cross" /></ToolButton>
                        <ToolButton $width={28} aria-label="输入"><Icon name="check" /></ToolButton>
                        <Fx aria-label="插入函数">fx</Fx>
                        <FormulaInput aria-label="编辑栏" value={formula} onChange={e => setFormula(e.target.value)} />
                    </FormulaBar>
                    <SheetArea>
                        <Viewport>
                            <Sheet />
                            <Arrows width="180" height="130" viewBox="0 0 180 130" fill="#fa0505">
                                <path d="M22 40H25L27 92H24Z" />
                                <path d="M23 22L32 45L24 41L15 45Z" />
                                <path d="M151 26L156 27L139 121L135 120Z" />
                                <path d="M155 7L160 30L153 26L144 28Z" />
                            </Arrows>
                        </Viewport>
                        <VScroll>
                            <SplitGrip />
                            <VTrack>
                                <Caret $up $gap={0} />
                                <VThumb />
                                <Caret $gap={0} />
                            </VTrack>
                        </VScroll>
                    </SheetArea>
                    <SheetBar>
                        <SheetNav>
                            {["first", "prev", "next", "last"].map(n => <button key={n} aria-label={n}><Icon name={n} /></button>)}
                        </SheetNav>
                        <SheetTab>Sheet1</SheetTab>
                        <ToolButton aria-label="新建工作表"><Icon name="plus" color="#3b4664" /></ToolButton>
                        <HScroll>
                            <Grip />
                            <HTrack>
                                <SideCaret />
                                <HThumb />
                                <SideCaret $right />
                            </HTrack>
                            <Grip />
                        </HScroll>
                    </SheetBar>
                </Main>
                <SideBar>
                    <SideGrip />
                    {SIDE.map(n => <SideButton key={n} aria-label={n}><Icon name={n} /></SideButton>)}
                    <SideMore aria-label="更多"><Icon name="ellipsis" /></SideMore>
                </SideBar>
            </Body>

            <StatusBar>
                <Icon name="macro" />
                <Divider $height={14} $gap={12} />
                <StatusText>区域选择状态</StatusText>
                <ViewButton $active aria-label="护眼模式"><Icon name="eye" /></ViewButton>
                <ViewButton $width={28} aria-label="阅读模式"><Icon name="crossCells" /><Caret /></ViewButton>
                <Divider $height={14} $gap={9} />
                <ViewButton $active aria-label="普通视图"><Icon name="grid" /></ViewButton>
                <ViewButton aria-label="页面布局"><Icon name="pageLayout" /></ViewButton>
                <ViewButton aria-label="分页预览"><Icon name="pageBreak" /></ViewButton>
                <Divider $height={14} $gap={9} />
                <ZoomLevel>160%<Caret $gap={4} /></ZoomLevel>
                <button aria-label="缩小"><Minus /></button>
                <ZoomRange type="range" aria-label="缩放" value={zoom} onChange={e => setZoom(e.target.value)} />
                <ToolButton $width={36} aria-label="放大"><Icon name="plus" /></ToolButton>
                <Icon name="fullscreen" />
            </StatusBar>

            <ImeBar>
                <ImeLogo width="33" height="32" viewBox="0 0 33 32">
                    <path d="M4 5L24 1Q27 1 28 4L32 22Q32 25 29 27L10 31Q6 31 5 28L1 9Q1 6 4 5Z" fill="#f1541f" />
                    <path d="M27 8Q12 5 9 11Q8 16 18 15Q27 16 25 21Q20 26 8 23" fill="none" stroke="#fff" strokeWidth="4" />
                </ImeLogo>
                <ImeText>中</ImeText>
                <svg width="12" height="12" viewBox="0 0 12 12" fill="none" stroke="currentColor">
                    <circle cx="3" cy="4" r="1.800" strokeWidth="1.500" />
                    <path d="M9.500 6V8Q9.500 10 7.500 11" strokeWidth="2.500" />
                </svg>
                <svg width="12" height="16" viewBox="0 0 12 16" fill="none" stroke="currentColor" strokeWidth="1.500">
                    <rect x="3.500" y="1" width="5" height="8" rx="2.500" fill="currentColor" />
                    <path d="M1 7Q1 12 6 12T11 7M6 12V15M3 15H9" />
                </svg>
                <svg width="15" height="12" viewBox="0 0 15 12">
                    <rect width="15" height="12" rx="2" fill="currentColor" />
                    <path d="M2 3.500H13M2 6H13M4 9H11" stroke="#fff" strokeWidth="1.500" strokeDasharray="2 1" />
                </svg>
                <svg width="13" height="13" viewBox="0 0 13 13" fill="currentColor">
                    <rect width="6" height="6" rx="2" />
                    <circle cx="10" cy="3" r="2" fill="none" stroke="currentColor" strokeWidth="2" />
                    <rect y="7" width="6" height="6" rx="2" />
                    <rect x="7" y="7" width="6" height="6" rx="2" />
                </svg>
            </ImeBar>
            <LevelMeter><i /></LevelMeter>
            <Watermark>
                <svg width="42" height="42" viewBox="0 0 42 42">
                    <path d="M41 1Q28 0 18 5Q2 14 0 26Q0 33 7 35Q3 26 12 17Q22 8 41 1Z" fill="#3f8ed8" />
                    <path d="M30 9Q14 13 12 23Q12 28 19 28Q28 25 27 18Q22 17 18 23Q16 14 30 9Z" fill="#58a4df" />
                    <path d="M31 12Q43 18 38 28Q30 40 4 40Q20 37 28 29Q34 21 31 12Z" fill="#5bbd62" />
                    <path d="M4 40Q17 36 24 32Q18 39 4 40Z" fill="#dfd23f" />
                </svg>
                <WatermarkText>极光下载站<span>www.xz7.com</span></WatermarkText>
            </Watermark>
        </Page>
    );
};

export default App;
